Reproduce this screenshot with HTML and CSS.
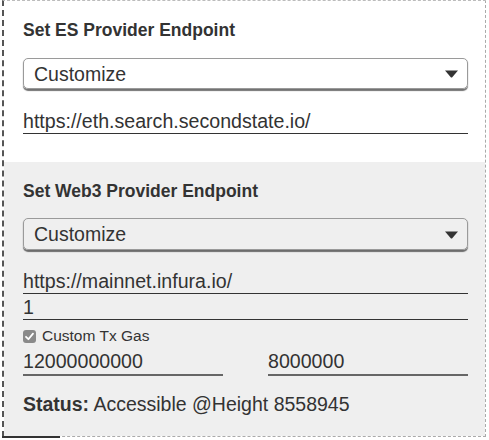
FILE: index.html
```html
<!DOCTYPE html>
<html>
<head>
<meta charset="utf-8">
<link rel="stylesheet" href="styles.css">
</head>
<body>
<div class="panel">
  <section class="sec sec-es">
    <h3 class="title">Set ES Provider Endpoint</h3>
    <div class="select">
      <span class="select-text">Customize</span>
      <svg class="caret" width="13" height="8" viewBox="0 0 13 8"><path d="M0 0.5 H13 L7 7.5 H6 Z" fill="#333"/></svg>
    </div>
    <input class="field field-es" type="text" value="https://eth.search.secondstate.io/">
  </section>
  <section class="sec sec-web3">
    <h3 class="title">Set Web3 Provider Endpoint</h3>
    <div class="select">
      <span class="select-text">Customize</span>
      <svg class="caret" width="13" height="8" viewBox="0 0 13 8"><path d="M0 0.5 H13 L7 7.5 H6 Z" fill="#333"/></svg>
    </div>
    <input class="field field-url" type="text" value="https://mainnet.infura.io/">
    <input class="field field-id" type="text" value="1">
    <label class="check-row">
      <span class="checkbox"><svg width="13" height="13" viewBox="0 0 13 13"><path d="M3 6.8 L5.4 9.2 L10 3.6" fill="none" stroke="#fff" stroke-width="1.8" stroke-linecap="round" stroke-linejoin="round"/></svg></span>
      <span class="check-label">Custom Tx Gas</span>
    </label>
    <div class="gas-row">
      <input class="field gas" type="text" value="12000000000">
      <input class="field gas" type="text" value="8000000">
    </div>
    <p class="status"><b>Status:</b> Accessible @Height 8558945</p>
  </section>
</div>
</body>
</html>
```

FILE: styles.css
```css
html, body {
  margin: 0;
  padding: 0;
  background: #fff;
}
body {
  font-family: "Liberation Sans", Arial, Helvetica, sans-serif;
  color: #333;
  width: 489px;
  height: 440px;
  overflow: hidden;
}
.panel {
  position: relative;
  margin-left: 2px;
  width: 481px;
  border-top: 1px dashed #bbb;
  border-right: 1px dashed #aaa;
  border-bottom: 1px dashed #aaa;
  border-left: 2px dashed #555;
}
.panel::after {
  content: "";
  position: absolute;
  left: -2px;
  bottom: -2px;
  width: 58px;
  height: 2px;
  background: #333;
}
.sec {
  padding: 19px 17px 0 19px;
  display: flex;
  flex-direction: column;
}
.sec-es {
  background: #fff;
  height: 161px;
  box-sizing: border-box;
}
.sec-web3 {
  background: #efefef;
  height: 274px;
  box-sizing: border-box;
}
.title {
  margin: 0;
  font-size: 17.5px;
  line-height: 20px;
  font-weight: bold;
  color: #333;
}
.select {
  margin-top: 18px;
  height: 31px;
  box-sizing: border-box;
  border: 1px solid #9a9a9a;
  border-radius: 5px;
  box-shadow: 0 1.5px 1px rgba(0,0,0,0.55);
  display: flex;
  align-items: center;
  justify-content: space-between;
  padding: 0 9px 0 10px;
}
.sec-web3 .select {
  margin-top: 17px;
  height: 32px;
}
.select-text {
  font-size: 19.5px;
  line-height: 24px;
  color: #333;
}
.caret {
  display: block;
  margin-top: 1px;
}
.field {
  display: block;
  box-sizing: border-box;
  width: 100%;
  margin: 0;
  padding: 0;
  border: 0;
  border-bottom: 1px solid #333;
  background: transparent;
  font-family: "Liberation Sans", Arial, Helvetica, sans-serif;
  font-size: 19.6px;
  color: #333;
  height: 25px;
  line-height: 24px;
  outline: none;
}
.field-es {
  margin-top: 20px;
}
.field-url {
  margin-top: 19px;
}
.field-id {
  margin-top: 1px;
}
.check-row {
  display: flex;
  align-items: center;
  gap: 6px;
  margin-top: 6px;
  height: 20px;
}
.checkbox {
  width: 13px;
  height: 13px;
  border-radius: 3px;
  background: #8a8a8a;
  display: flex;
}
.check-label {
  font-size: 15.5px;
  line-height: 20px;
  color: #333;
}
.gas-row {
  display: grid;
  grid-template-columns: 1fr 1fr;
  column-gap: 45px;
  margin-top: 3px;
}
.gas {
  height: 27px;
  border-bottom: 2px solid #666;
}
.status {
  margin: 17px 0 0;
  font-size: 19.5px;
  line-height: 22px;
  color: #333;
}
.status b {
  font-weight: bold;
}
```
